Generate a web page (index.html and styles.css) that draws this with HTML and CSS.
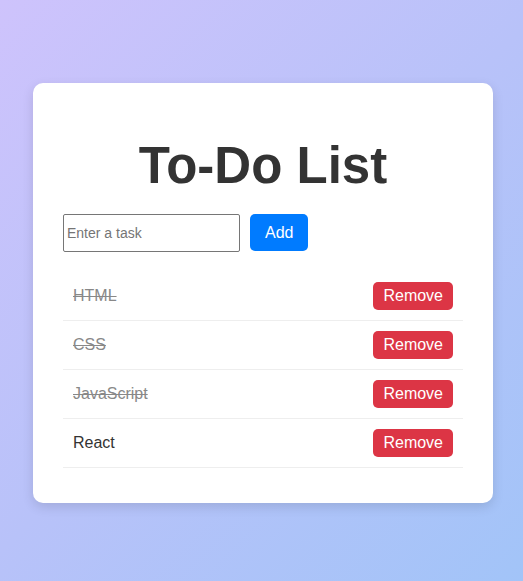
FILE: index.html
```html
<!DOCTYPE html>
<html lang="en">
<head>
<meta charset="utf-8">
<title>To-Do List</title>
<link rel="stylesheet" href="styles.css">
</head>
<body>
<main class="page">
  <section class="card">
    <h1 class="title">To-Do List</h1>
    <div class="add-row">
      <input class="task-input" type="text" placeholder="Enter a task">
      <button class="btn btn-add">Add</button>
    </div>
    <ul class="tasks">
      <li class="task done"><span class="task-text">HTML</span><button class="btn btn-remove">Remove</button></li>
      <li class="task done"><span class="task-text">CSS</span><button class="btn btn-remove">Remove</button></li>
      <li class="task done"><span class="task-text">JavaScript</span><button class="btn btn-remove">Remove</button></li>
      <li class="task"><span class="task-text">React</span><button class="btn btn-remove">Remove</button></li>
    </ul>
  </section>
</main>
</body>
</html>
```
FILE: styles.css
```css
html, body {
  margin: 0;
  padding: 0;
  height: 100%;
}
body {
  font-family: "Liberation Sans", Arial, sans-serif;
  background: linear-gradient(135deg, #cec3fc 0%, #b8c2f9 50%, #a2c4f8 100%);
  min-height: 100vh;
}
.page {
  padding: 83px 30px 0 33px;
  display: flex;
}
.card {
  width: 400px;
  background: #fff;
  border-radius: 10px;
  padding: 30px 30px 35px;
  box-shadow: 0 4px 12px rgba(0, 0, 0, 0.12);
}
.title {
  margin: 24px 0 20px;
  font-size: 51px;
  line-height: 57px;
  font-weight: bold;
  color: #333;
  text-align: center;
}
.add-row {
  display: flex;
  gap: 10px;
  height: 38px;
}
.task-input {
  box-sizing: border-box;
  width: 177px;
  height: 38px;
  margin: 0;
  padding: 0 3px;
  border: 1px solid #767676;
  border-radius: 2px;
  font-family: "Liberation Sans", Arial, sans-serif;
  font-size: 14px;
  color: #333;
}
.task-input::placeholder {
  color: #757575;
}
.btn {
  border: none;
  color: #fff;
  font-family: "Liberation Sans", Arial, sans-serif;
  font-size: 16px;
  border-radius: 5px;
  cursor: pointer;
  margin: 0;
}
.btn-add {
  background: #007bff;
  height: 37px;
  padding: 0 15px;
}
.tasks {
  list-style: none;
  margin: 20px 0 0;
  padding: 0;
}
.task {
  display: flex;
  justify-content: space-between;
  align-items: center;
  padding: 10px;
  border-bottom: 1px solid #eee;
  font-size: 16px;
  color: #333;
}
.task.done .task-text {
  color: #888;
  text-decoration: line-through;
}
.btn-remove {
  background: #dc3545;
  height: 28px;
  padding: 0 10px;
}
```
